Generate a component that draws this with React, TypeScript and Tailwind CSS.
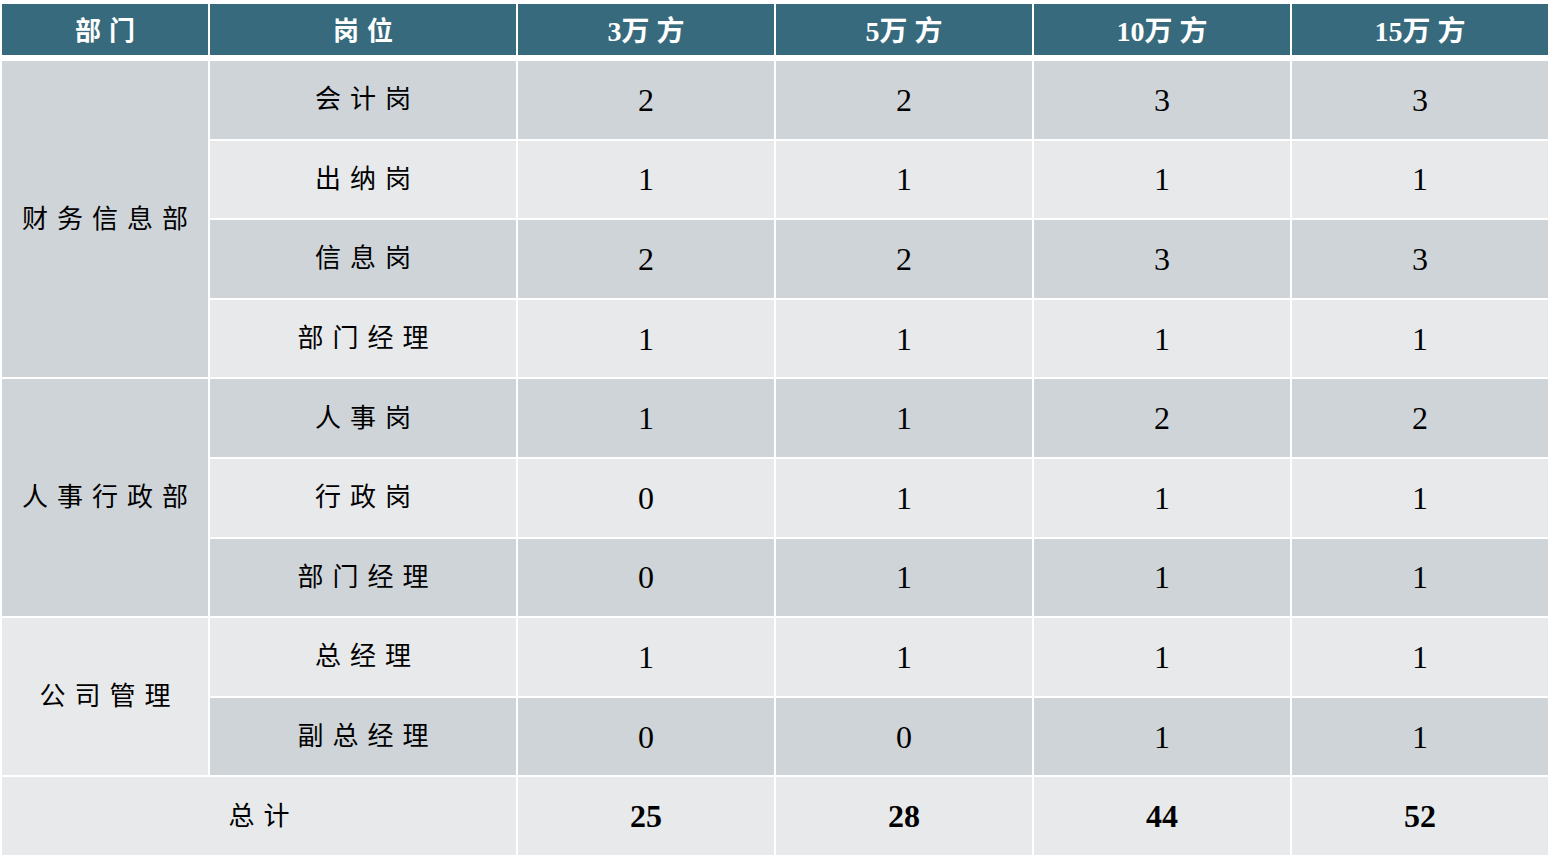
const cols = ["3万 方", "5万 方", "10万 方", "15万 方"];

type Row = { post: string; values: number[] };

const groups: { dept: string; span: string; bg: string; rows: Row[] }[] = [
  {
    dept: "财务信息部",
    span: "row-span-4",
    bg: "bg-[#cfd4d8]",
    rows: [
      { post: "会计岗", values: [2, 2, 3, 3] },
      { post: "出纳岗", values: [1, 1, 1, 1] },
      { post: "信息岗", values: [2, 2, 3, 3] },
      { post: "部门经理", values: [1, 1, 1, 1] },
    ],
  },
  {
    dept: "人事行政部",
    span: "row-span-3",
    bg: "bg-[#cfd4d8]",
    rows: [
      { post: "人事岗", values: [1, 1, 2, 2] },
      { post: "行政岗", values: [0, 1, 1, 1] },
      { post: "部门经理", values: [0, 1, 1, 1] },
    ],
  },
  {
    dept: "公司管理",
    span: "row-span-2",
    bg: "bg-[#e7e9eb]",
    rows: [
      { post: "总经理", values: [1, 1, 1, 1] },
      { post: "副总经理", values: [0, 0, 1, 1] },
    ],
  },
];

const totals = [25, 28, 44, 52];

const cn = "flex items-center justify-center text-[26px] tracking-[9px] pl-[9px] text-black";
const num = "flex items-center justify-center text-[32px] text-black";

export default function App() {
  let rowIndex = 0;
  const cells: React.ReactNode[] = [];

  groups.forEach((g, gi) => {
    cells.push(
      <div key={`d${gi}`} className={`${g.bg} ${g.span} ${cn}`}>
        {g.dept}
      </div>
    );
    g.rows.forEach((r, ri) => {
      const bg = rowIndex % 2 === 0 ? "bg-[#cfd4d8]" : "bg-[#e7e9eb]";
      cells.push(
        <div key={`p${gi}-${ri}`} className={`${bg} ${cn}`}>
          {r.post}
        </div>
      );
      r.values.forEach((v, vi) => {
        cells.push(
          <div key={`v${gi}-${ri}-${vi}`} className={`${bg} ${num}`}>
            {v}
          </div>
        );
      });
      rowIndex++;
    });
  });

  return (
    <div className="w-[1554px] h-[858px] bg-white pl-[2px] pt-[4px] overflow-hidden font-['Liberation_Serif','Noto_Sans_CJK_SC',serif]">
      <div className="grid grid-cols-[206px_306px_256px_256px_256px_256px] gap-x-[2px] h-[51px]">
        {["部门", "岗位"].map((h) => (
          <div
            key={h}
            className="bg-[#366a7c] text-white font-bold text-[26px] tracking-[8px] pl-[8px] pt-[4px] flex items-center justify-center"
          >
            {h}
          </div>
        ))}
        {cols.map((h) => (
          <div
            key={h}
            className="bg-[#366a7c] text-white font-bold text-[28px] pt-[4px] flex items-center justify-center"
          >
            {h}
          </div>
        ))}
      </div>

      <div className="mt-[6px] grid grid-cols-[206px_306px_256px_256px_256px_256px] grid-rows-[repeat(10,77.6px)] gap-[2px]">
        {cells}
        <div className={`bg-[#e7e9eb] col-span-2 ${cn}`}>总计</div>
        {totals.map((t, i) => (
          <div key={i} className={`bg-[#e7e9eb] ${num} font-bold`}>
            {t}
          </div>
        ))}
      </div>
    </div>
  );
}
